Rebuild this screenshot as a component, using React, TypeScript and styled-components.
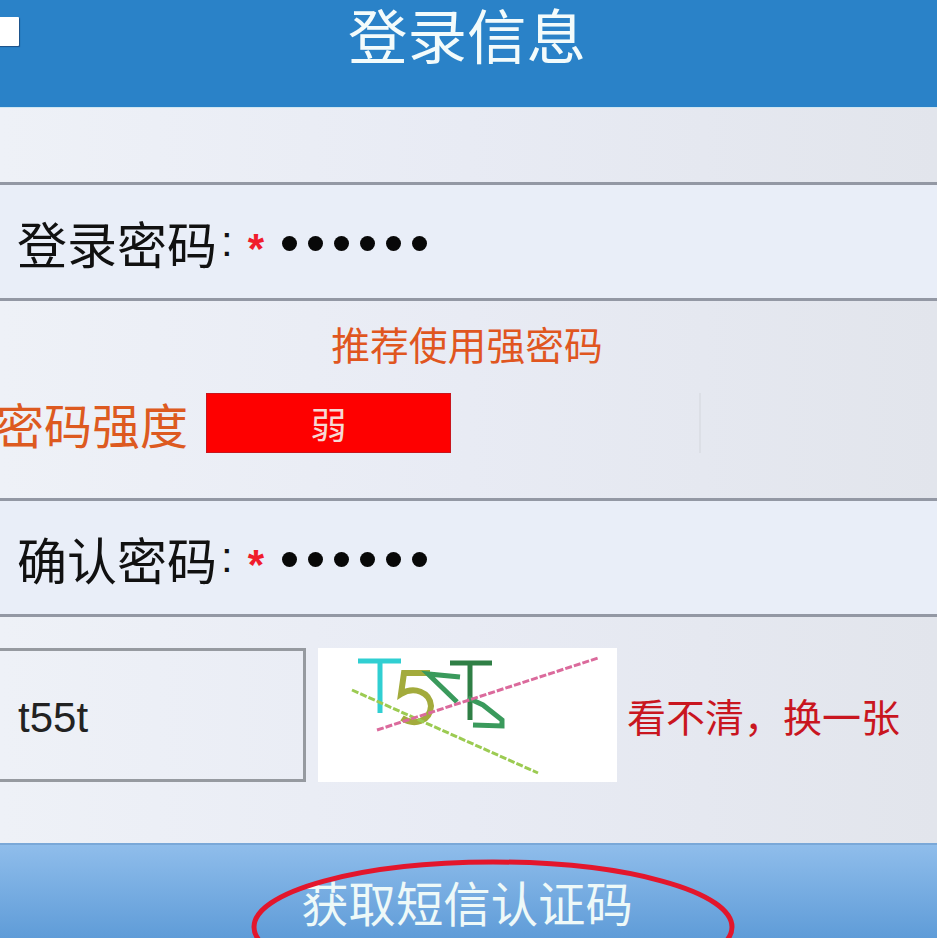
import React from "react";
import styled, { createGlobalStyle } from "styled-components";

const Global = createGlobalStyle`
  html, body { margin: 0; padding: 0; width: 937px; height: 938px; overflow: hidden; background: #e8ecf5; }
  * { box-sizing: border-box; }
`;
const CJK = `"Noto Sans CJK SC", "Liberation Sans", sans-serif`;

const Page = styled.div`
  width: 937px; height: 938px; overflow: hidden; display: flex; flex-direction: column;
  font-family: ${CJK};
  background: linear-gradient(90deg, #eef1f7 0%, #e8ebf4 50%, #e2e5ec 100%);
`;
const Header = styled.header`
  position: relative; flex: 0 0 108px; background: #2a82c8; border-bottom: 1px solid #cfe6f2;
  display: flex; justify-content: center; align-items: flex-start;
`;
const Check = styled.div`
  position: absolute; left: -12px; top: 17px; width: 31px; height: 29px; background: #fff;
  border-radius: 1px; box-shadow: 1px 1px 1px #1c4f86;
`;
const Title = styled.h1`
  margin: 0 0 0 -3px; color: #f3fbfb; font-size: 59.5px; font-weight: 400; line-height: 66px;
`;
const Spacer = styled.div`flex: 0 0 74px;`;
const Row = styled.div`
  flex: 0 0 ${p => p.$h}px; border-top: 3px solid #9398a4; display: flex; align-items: center;
`;
const FieldRow = styled(Row)`padding-left: 17px; background: #e9eef8;`;
const Label = styled.span`font-size: 50px; line-height: 60px; color: #111;`;
const Colon = styled.span`font-family: "Liberation Sans", sans-serif; font-size: 42px; color: #111; margin-left: 4px;`;
const Star = styled.span`color: #f01c2c; font-family: "Liberation Sans", sans-serif; font-size: 42px; font-weight: 700; margin: 14px 18px 0 15px; line-height: 30px;`;
const Dots = styled.span`display: inline-flex; gap: 11px; margin-top: 3px;`;
const Dot = styled.i`width: 15px; height: 15px; border-radius: 50%; background: #080808; display: block;`;

const StrengthRow = styled(Row)`
  flex-direction: column; align-items: stretch; padding-top: 17px;
`;
const Hint = styled.div`
  text-align: center; color: #e0561f; font-size: 38.8px; line-height: 50px; margin-left: -3px;
`;
const Meter = styled.div`display: flex; align-items: center; margin: 25px 0 0 -4px;`;
const MeterLabel = styled.span`color: #dd5a20; font-size: 48px; line-height: 60px; width: 210px; flex: none; white-space: nowrap;`;
const Weak = styled.div`
  width: 245px; height: 60px; background: #fe0000; color: #f6d9d4; border: 1px solid #c8151c;
  font-size: 36px; line-height: 58px; text-align: center; flex: none;
`;
const Empty = styled.div`width: 250px; height: 60px; border-right: 2px solid #dcdfe6; flex: none;`;

const CaptchaRow = styled(Row)`padding-top: 31px; align-items: flex-start;`;
const CodeInput = styled.div`
  width: 310px; height: 134px; margin-left: -4px; border: 3px solid #969aa0; padding-left: 19px;
  font: 42px/134px "Liberation Sans", sans-serif; color: #222; flex: none;
`;
const CaptchaImg = styled.svg`width: 299px; height: 134px; background: #fff; margin-left: 12px; flex: none; display: block;`;
const Refresh = styled.span`color: #c9161f; font-size: 39px; line-height: 134px; margin-left: 10px; white-space: nowrap;`;

const SubmitBar = styled.button`
  position: relative; flex: 1; border: 0; border-top: 2px solid #7aa8d8; width: 100%; padding: 17px 3px 0 0;
  background: linear-gradient(180deg, #8fbdeb 0%, #5f9cd8 100%); color: #eef9f8;
  font-family: ${CJK}; font-size: 47.4px; line-height: 80px; text-align: center; display: block;
  overflow: hidden;
`;
const Ring = styled.svg`position: absolute; left: 240px; top: 2px; width: 510px; height: 100px; pointer-events: none;`;

export default function App() {
  return (
    <Page>
      <Global />
      <Header><Check /><Title>登录信息</Title></Header>
      <Spacer />
      <FieldRow $h={116}>
        <Label>登录密码</Label><Colon>:</Colon><Star>*</Star>
        <Dots>{[0,1,2,3,4,5].map(i => <Dot key={i} />)}</Dots>
      </FieldRow>
      <StrengthRow $h={200}>
        <Hint>推荐使用强密码</Hint>
        <Meter>
          <MeterLabel>密码强度</MeterLabel>
          <Weak>弱</Weak>
          <Empty />
        </Meter>
      </StrengthRow>
      <FieldRow $h={116}>
        <Label>确认密码</Label><Colon>:</Colon><Star>*</Star>
        <Dots>{[0,1,2,3,4,5].map(i => <Dot key={i} />)}</Dots>
      </FieldRow>
      <CaptchaRow $h={229}>
        <CodeInput>t55t</CodeInput>
        <CaptchaImg viewBox="0 0 299 134">
          <g fill="none">
            <path d="M40 13H83M62 13V65" stroke="#30cfd2" strokeWidth="5" />
            <path d="M112 25H86L83 46C96 38 112 44 113 58C112 74 96 78 84 70" stroke="#a3ab3c" strokeWidth="6" />
            <path d="M132 15H174M152 15V72" stroke="#2f7f45" strokeWidth="5" />
            <path d="M142 29L110 26L139 54M150 50L165 57L184 72V78L155 77" stroke="#3a9a5c" strokeWidth="5" />
            <path d="M34 42L220 125" stroke="#9ccb52" strokeWidth="3" strokeDasharray="7 2" />
            <path d="M59 82L280 10" stroke="#db6a9c" strokeWidth="3" strokeDasharray="7 2" />
          </g>
        </CaptchaImg>
        <Refresh>看不清，换一张</Refresh>
      </CaptchaRow>
      <SubmitBar>
        获取短信认证码
        <Ring viewBox="0 0 510 100">
          <ellipse cx="253" cy="80" rx="239" ry="65" fill="none" stroke="#e3162c" strokeWidth="5" />
        </Ring>
      </SubmitBar>
    </Page>
  );
}
